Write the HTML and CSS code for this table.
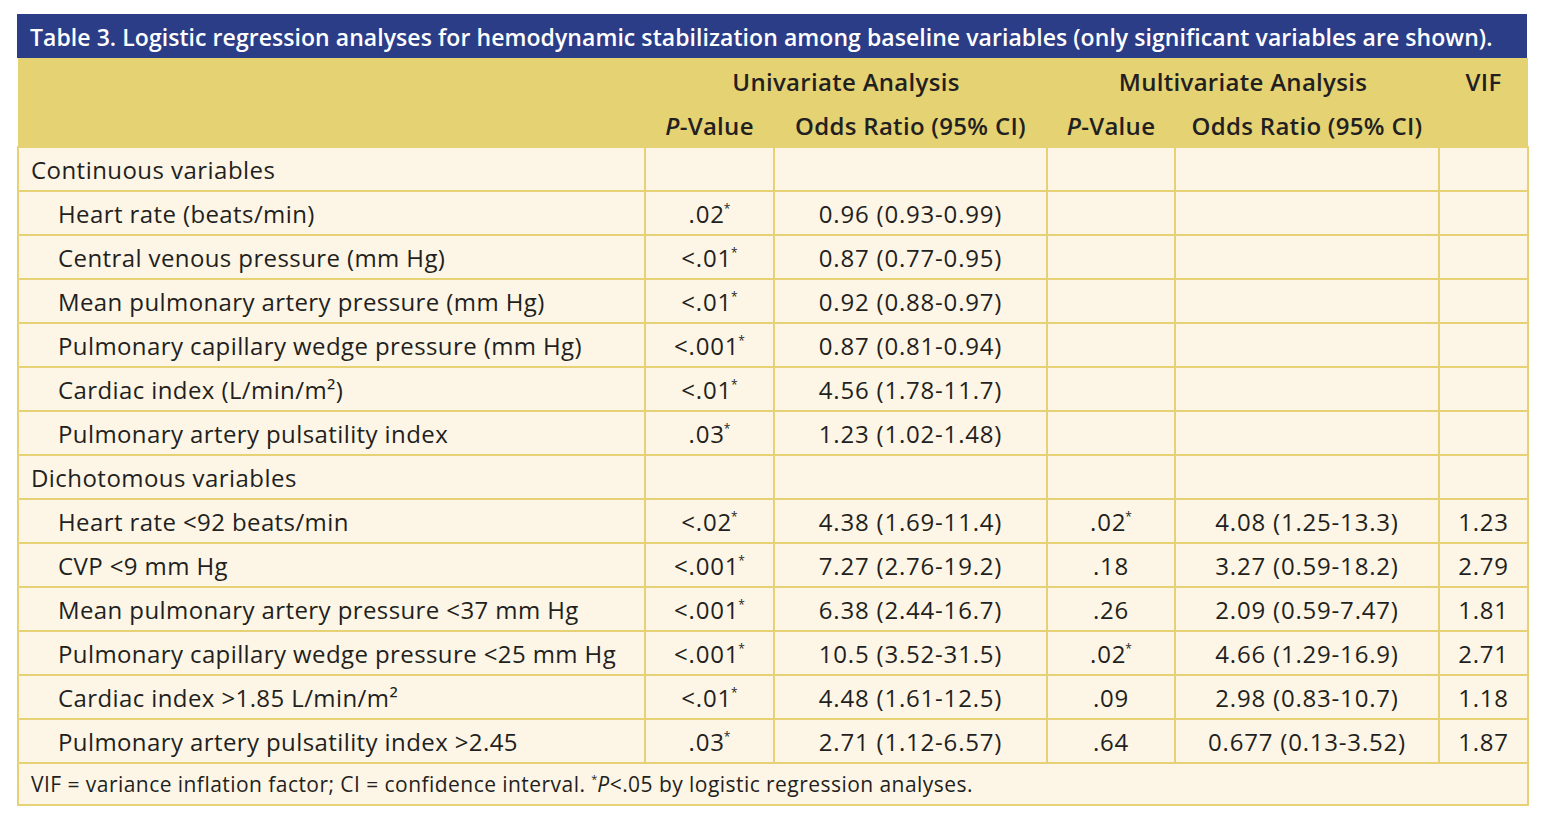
FILE: index.html
```html
<!DOCTYPE html>
<html>
<head>
<meta charset="utf-8">
<link rel="stylesheet" href="styles.css">
</head>
<body>
<div class="wrap">
  <div class="title">Table 3. Logistic regression analyses for hemodynamic stabilization among baseline variables (only significant variables are shown).</div>
  <table class="tbl">
    <colgroup>
      <col class="c1"><col class="c2"><col class="c3"><col class="c4"><col class="c5"><col class="c6">
    </colgroup>
    <thead>
      <tr class="h1">
        <th></th>
        <th colspan="2">Univariate Analysis</th>
        <th colspan="2">Multivariate Analysis</th>
        <th>VIF</th>
      </tr>
      <tr class="h2">
        <th></th>
        <th><i>P</i>-Value</th>
        <th>Odds Ratio (95% CI)</th>
        <th><i>P</i>-Value</th>
        <th>Odds Ratio (95% CI)</th>
        <th></th>
      </tr>
    </thead>
    <tbody>
      <tr><td class="grp">Continuous variables</td><td></td><td></td><td></td><td></td><td></td></tr>
      <tr><td class="lbl">Heart rate (beats/min)</td><td>.02<sup>*</sup></td><td>0.96 (0.93-0.99)</td><td></td><td></td><td></td></tr>
      <tr><td class="lbl">Central venous pressure (mm Hg)</td><td>&lt;.01<sup>*</sup></td><td>0.87 (0.77-0.95)</td><td></td><td></td><td></td></tr>
      <tr><td class="lbl">Mean pulmonary artery pressure (mm Hg)</td><td>&lt;.01<sup>*</sup></td><td>0.92 (0.88-0.97)</td><td></td><td></td><td></td></tr>
      <tr><td class="lbl">Pulmonary capillary wedge pressure (mm Hg)</td><td>&lt;.001<sup>*</sup></td><td>0.87 (0.81-0.94)</td><td></td><td></td><td></td></tr>
      <tr><td class="lbl">Cardiac index (L/min/m²)</td><td>&lt;.01<sup>*</sup></td><td>4.56 (1.78-11.7)</td><td></td><td></td><td></td></tr>
      <tr><td class="lbl">Pulmonary artery pulsatility index</td><td>.03<sup>*</sup></td><td>1.23 (1.02-1.48)</td><td></td><td></td><td></td></tr>
      <tr><td class="grp">Dichotomous variables</td><td></td><td></td><td></td><td></td><td></td></tr>
      <tr><td class="lbl">Heart rate &lt;92 beats/min</td><td>&lt;.02<sup>*</sup></td><td>4.38 (1.69-11.4)</td><td>.02<sup>*</sup></td><td>4.08 (1.25-13.3)</td><td>1.23</td></tr>
      <tr><td class="lbl">CVP &lt;9 mm Hg</td><td>&lt;.001<sup>*</sup></td><td>7.27 (2.76-19.2)</td><td>.18</td><td>3.27 (0.59-18.2)</td><td>2.79</td></tr>
      <tr><td class="lbl">Mean pulmonary artery pressure &lt;37 mm Hg</td><td>&lt;.001<sup>*</sup></td><td>6.38 (2.44-16.7)</td><td>.26</td><td>2.09 (0.59-7.47)</td><td>1.81</td></tr>
      <tr><td class="lbl">Pulmonary capillary wedge pressure &lt;25 mm Hg</td><td>&lt;.001<sup>*</sup></td><td>10.5 (3.52-31.5)</td><td>.02<sup>*</sup></td><td>4.66 (1.29-16.9)</td><td>2.71</td></tr>
      <tr><td class="lbl">Cardiac index &gt;1.85 L/min/m²</td><td>&lt;.01<sup>*</sup></td><td>4.48 (1.61-12.5)</td><td>.09</td><td>2.98 (0.83-10.7)</td><td>1.18</td></tr>
      <tr><td class="lbl">Pulmonary artery pulsatility index &gt;2.45</td><td>.03<sup>*</sup></td><td>2.71 (1.12-6.57)</td><td>.64</td><td>0.677 (0.13-3.52)</td><td>1.87</td></tr>
    </tbody>
    <tfoot>
      <tr><td colspan="6" class="foot">VIF = variance inflation factor; CI = confidence interval. <sup>*</sup><i>P</i>&lt;.05 by logistic regression analyses.</td></tr>
    </tfoot>
  </table>
</div>
</body>
</html>
```

FILE: styles.css
```css
html, body {
  margin: 0;
  padding: 0;
  background: #ffffff;
}
.wrap {
  padding: 14px 0 0 17px;
  width: 1510px;
  font-family: "Open Sans", "Liberation Sans", sans-serif;
  color: #231f20;
}
.title {
  background: #2c3d88;
  color: #ffffff;
  height: 44px;
  line-height: 46px;
  padding-left: 13px;
  font-size: 23px;
  font-weight: 600;
  letter-spacing: 0.06px;
  white-space: nowrap;
  box-sizing: border-box;
}
.tbl {
  width: 1510px;
  border-collapse: collapse;
  table-layout: fixed;
  font-size: 24px;
}
.c1 { width: 627px; }
.c2 { width: 129px; }
.c3 { width: 273px; }
.c4 { width: 128px; }
.c5 { width: 264px; }
.c6 { width: 89px; }
thead th {
  background: #e4d273;
  font-weight: 600;
  padding: 0;
  height: 44px;
  text-align: center;
  color: #231f20;
  letter-spacing: 0.3px;
  white-space: nowrap;
  vertical-align: middle;
}
thead .h1 th { padding-top: 3px; height: 41px; }
thead .h2 th { padding-top: 2px; height: 42px; }
tbody td {
  background: #fdf6e7;
  border: 2px solid #e6d274;
  height: 42px;
  padding: 0;
  text-align: center;
  vertical-align: middle;
  white-space: nowrap;
  letter-spacing: 0.8px;
}
tbody td.grp {
  text-align: left;
  padding-left: 12px;
  letter-spacing: 0.45px;
}
tbody td.lbl {
  text-align: left;
  padding-left: 39px;
  letter-spacing: 0.4px;
}
sup {
  font-size: 12px;
  vertical-align: 10px;
  line-height: 0;
  letter-spacing: 0;
  margin-left: -1px;
}
tfoot td.foot {
  background: #fdf6e7;
  border: 2px solid #e6d274;
  height: 40px;
  padding: 0 0 0 12px;
  font-size: 21px;
  letter-spacing: 0.45px;
  text-align: left;
  vertical-align: middle;
  white-space: nowrap;
}
tfoot sup { font-size: 11px; vertical-align: 9px; margin-left: 0; }
```
